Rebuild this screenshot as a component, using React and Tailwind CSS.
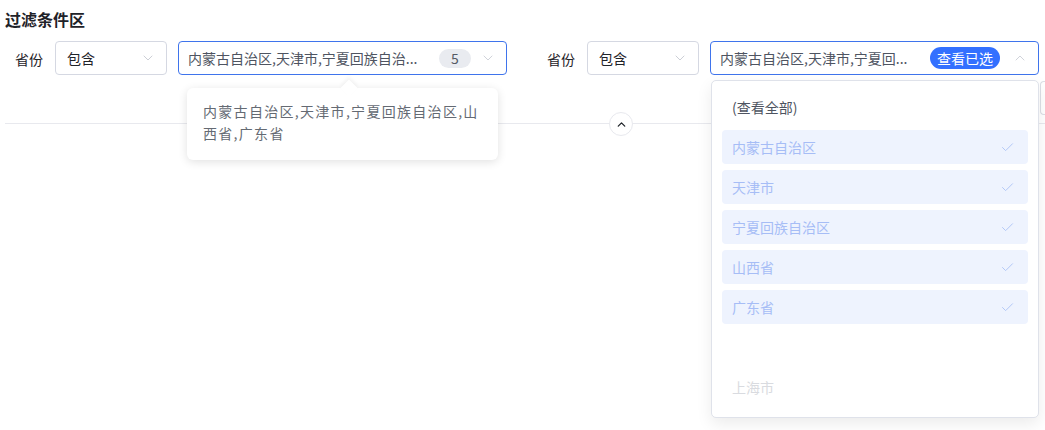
import { ChevronDown, ChevronUp, Check } from 'lucide-react';

const font = { fontFamily: '"Noto Sans CJK SC", "Noto Sans", sans-serif' };
const selected = ['内蒙古自治区', '天津市', '宁夏回族自治区', '山西省', '广东省'];

function OpSelect() {
  return (
    <div className="w-[112px] h-[34px] shrink-0 flex items-center justify-between pl-[11px] pr-[10px] border border-[#d5d8e2] rounded-[4px] text-[14px] text-[#1f2329]">
      <span>包含</span>
      <ChevronDown size={16} strokeWidth={1.2} className="text-[#bfc3cc]" />
    </div>
  );
}

function Label() {
  return <span className="text-[14px] text-[#1f2329] shrink-0">省份</span>;
}

export default function App() {
  return (
    <div className="w-[1045px] h-[430px] bg-white overflow-hidden relative" style={font}>
      <div className="pl-[5px] pt-[7px]">
        <h2 className="text-[16px] font-bold text-[#1f2329] leading-[24px]">过滤条件区</h2>

        <div className="flex items-center mt-[10px] h-[34px]">
          <div className="pl-[10px] mr-[12px]"><Label /></div>
          <OpSelect />
          <div className="relative ml-[11px] w-[329px] h-[34px] shrink-0 flex items-center pl-[9px] pr-[10px] border border-[#3f74ec] rounded-[4px]">
            <span className="flex-1 whitespace-nowrap overflow-hidden text-[14px] text-[#4e5461]">内蒙古自治区,天津市,宁夏回族自治...</span>
            <span className="ml-[10px] w-[32px] h-[19px] rounded-full bg-[#e9ebf0] text-[14px] text-[#555a64] flex items-center justify-center">5</span>
            <ChevronDown size={16} strokeWidth={1.2} className="ml-[9px] text-[#c4c8d0]" />

            <div className="absolute left-[8px] top-[46px] w-[311px] bg-white rounded-[6px] shadow-[0_2px_10px_rgba(0,0,0,0.12)] pl-[16px] pr-[12px] pt-[12px] pb-[16px] z-20">
              <div className="absolute -top-[6px] left-[156px] w-[12px] h-[12px] bg-white rotate-45 shadow-[-2px_-2px_4px_rgba(0,0,0,0.05)]"></div>
              <p className="relative text-[14px] leading-[22px] text-[#646a73] tracking-[1.3px]">内蒙古自治区,天津市,宁夏回族自治区,山西省,广东省</p>
            </div>
          </div>

          <div className="ml-[40px] mr-[12px]"><Label /></div>
          <OpSelect />
          <div className="relative ml-[11px] w-[329px] h-[34px] shrink-0 flex items-center pl-[9px] pr-[10px] border border-[#3f74ec] rounded-[4px]">
            <span className="flex-1 whitespace-nowrap overflow-hidden text-[14px] text-[#4e5461]">内蒙古自治区,天津市,宁夏回...</span>
            <span className="ml-[10px] px-[7px] h-[22px] rounded-full bg-[#3370ff] text-[14px] text-white flex items-center">查看已选</span>
            <ChevronUp size={16} strokeWidth={1.2} className="ml-[12px] text-[#c4c8d0]" />

            <div className="absolute left-0 top-[38px] w-[328px] h-[338px] bg-white border border-[#dfe2ea] rounded-[5px] shadow-[0_6px_16px_rgba(0,0,0,0.08)] px-[10px] pt-[9px] z-20">
              <div className="h-[34px] flex items-center pl-[10px] text-[14px] text-[#4e5461]">(查看全部)</div>
              <div className="flex flex-col gap-[6px] mt-[6px]">
                {selected.map(name => (
                  <div key={name} className="h-[34px] rounded-[4px] bg-[#eef3fe] flex items-center justify-between pl-[10px] pr-[13px] text-[14px] text-[#a6bdf6]">
                    <span>{name}</span>
                    <Check size={15} strokeWidth={1.6} className="text-[#b3c8f7]" />
                  </div>
                ))}
                <div className="h-[34px]"></div>
                <div className="h-[34px] flex items-center pl-[10px] text-[14px] text-[#d9dbe0]">上海市</div>
              </div>
            </div>
          </div>
        </div>

        <div className="flex justify-end h-[34px] mt-[6px]">
          <div className="w-[5px] border-l border-y border-[#dcdfe6] rounded-l-[4px]"></div>
        </div>

        <div className="relative mt-[8px] border-t border-[#e8e9ee]">
          <button className="absolute left-[604px] -top-[12px] w-[24px] h-[24px] rounded-full border border-[#e8e9ee] bg-white flex items-center justify-center">
            <ChevronUp size={13} strokeWidth={2.4} className="text-[#1f2329]" />
          </button>
        </div>
      </div>
    </div>
  );
}
